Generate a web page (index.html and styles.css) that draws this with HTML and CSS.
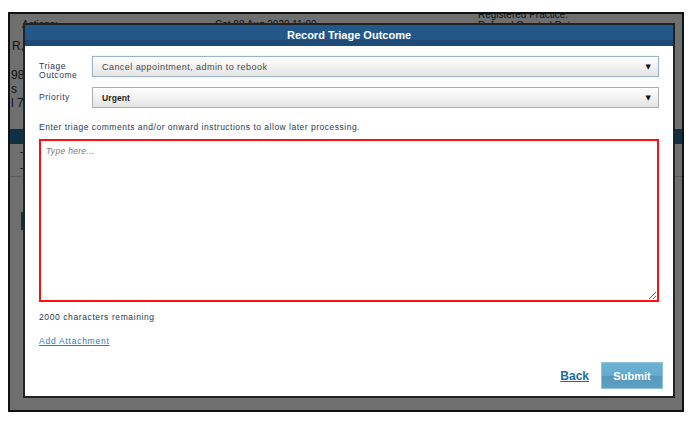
FILE: index.html
```html
<!DOCTYPE html>
<html>
<head>
<meta charset="utf-8">
<link rel="stylesheet" href="styles.css">
</head>
<body>
<div class="frame">
  <div class="page">
    <div class="bg-top">
      <div class="bg-col bg-col1">Actions:</div>
      <div class="bg-col bg-col2">Cat 88 Aug 2020 11:00</div>
      <div class="bg-col bg-col3">
        <div class="bg-reg">Registered Practice:</div>
        <div class="bg-reg">Referral Created Date:</div>
      </div>
    </div>
    <div class="bg-left">
      <div class="bg-name">R,</div>
      <div class="bg-line bg-line-first">98</div>
      <div class="bg-line">s</div>
      <div class="bg-line">l 7</div>
    </div>
    <div class="bg-bar"></div>
    <div class="bg-row">-</div>
    <div class="bg-row bg-row-last">-</div>
    <div class="bg-mark"></div>
  </div>
  <div class="overlay"></div>
  <div class="modal">
    <div class="modal-header">Record Triage Outcome</div>
    <div class="modal-body">
      <div class="field field-outcome">
        <div class="label label-two">Triage<br>Outcome</div>
        <div class="select select-focus"><span class="select-text">Cancel appointment, admin to rebook</span><span class="arrow">▼</span></div>
      </div>
      <div class="field field-priority">
        <div class="label">Priority</div>
        <div class="select"><span class="select-text select-strong">Urgent</span><span class="arrow">▼</span></div>
      </div>
      <p class="instructions">Enter triage comments and/or onward instructions to allow later processing.</p>
      <textarea class="comments" placeholder="Type here..."></textarea>
      <p class="remaining">2000 characters remaining</p>
      <a class="attach" href="#">Add Attachment</a>
    </div>
    <div class="modal-footer">
      <a class="back" href="#">Back</a>
      <button class="submit" type="button">Submit</button>
    </div>
  </div>
</div>
</body>
</html>
```

FILE: styles.css
```css
html, body {
  margin: 0;
  padding: 0;
  background: #ffffff;
}

body {
  font-family: "Liberation Sans", Arial, sans-serif;
}

.frame {
  position: relative;
  margin: 12px 0 0 8px;
  width: 672px;
  height: 396px;
  border: 2px solid #111;
  overflow: hidden;
  background: #fff;
}

/* background page (dimmed) */
.page {
  color: #1c2a3a;
  font-size: 10px;
}

.bg-top {
  display: flex;
  height: 26px;
  margin-top: -4px;
}

.bg-col1 {
  width: 185px;
  padding: 9px 0 0 12px;
}

.bg-col2 {
  width: 263px;
  padding: 9px 0 0 8px;
}

.bg-col3 {
  margin-top: -1px;
}

.bg-reg {
  line-height: 11px;
}

.bg-left {
  padding-left: 1px;
  font-size: 12px;
  color: #1c2a3a;
}

.bg-name {
  height: 20px;
  line-height: 20px;
  padding-left: 1px;
}

.bg-line {
  line-height: 14px;
}

.bg-line-first {
  margin-top: 12px;
}

.bg-bar {
  margin-top: 19px;
  height: 15px;
  background: #1f6e9e;
}

.bg-row {
  height: 16px;
  line-height: 16px;
  padding-left: 10px;
  font-size: 10px;
}

.bg-row-last {
  border-bottom: 1px solid #c9d6e0;
}

.bg-mark {
  margin: 35px 0 0 11px;
  width: 3px;
  height: 18px;
  background: #1f6e9e;
}

.overlay {
  position: absolute;
  inset: 0;
  background: rgba(0, 0, 0, 0.565);
}

/* modal dialog */
.modal {
  position: absolute;
  left: 13px;
  top: 9px;
  width: 652px;
  height: 375px;
  box-sizing: border-box;
  border: 2px solid #222;
  background: #fff;
  display: flex;
  flex-direction: column;
}

.modal-header {
  height: 21px;
  line-height: 21px;
  text-align: center;
  color: #fff;
  font-weight: bold;
  font-size: 11px;
  background: linear-gradient(to bottom, #245889 0%, #23578a 70%, #1c4976 72%, #1d4a78 100%);
}

.modal-body {
  flex: 1;
  padding: 10px 14px 0 14px;
  display: flex;
  flex-direction: column;
  align-items: flex-start;
}

.field {
  display: flex;
  align-items: center;
  width: 100%;
  height: 21px;
}

.field-priority {
  margin-top: 10px;
}

.label {
  width: 53px;
  flex: none;
  font-size: 8.5px;
  letter-spacing: 0.55px;
  color: #1d3957;
  line-height: 9px;
}

.label-two {
  align-self: flex-start;
  padding-top: 6px;
}

.select {
  flex: 1;
  height: 21px;
  box-sizing: border-box;
  border: 1px solid #adadad;
  background: linear-gradient(to bottom, #ffffff 0%, #f3f3f3 45%, #e4e4e4 100%);
  display: flex;
  align-items: center;
  padding: 0 7px 0 9px;
}

.select-focus {
  border-color: #9cb3cd;
  box-shadow: 0 0 1px #b7c9de;
}

.select-text {
  flex: 1;
  font-size: 9px;
  letter-spacing: 0.45px;
  color: #4a4a4a;
}

.select-strong {
  color: #1e1e1e;
  font-weight: bold;
  font-size: 8.5px;
  letter-spacing: 0.1px;
}

.arrow {
  font-family: "DejaVu Sans", sans-serif;
  font-size: 7px;
  color: #111;
}

.instructions {
  margin: 13px 0 0 0;
  font-size: 8.5px;
  letter-spacing: 0.5px;
  color: #1d3957;
  line-height: 12px;
}

.comments {
  margin-top: 6px;
  width: 100%;
  height: 163px;
  box-sizing: border-box;
  border: 2px solid #ff1010;
  padding: 5px 5px;
  font-family: "Liberation Sans", Arial, sans-serif;
  font-size: 8.5px;
  resize: vertical;
  outline: none;
}

.comments::placeholder {
  color: #777;
  font-style: italic;
  letter-spacing: 0.3px;
}

.remaining {
  margin: 9px 0 0 0;
  font-size: 8.5px;
  letter-spacing: 0.6px;
  color: #22384e;
  line-height: 12px;
}

.attach {
  margin-top: 12px;
  font-size: 8.5px;
  letter-spacing: 0.75px;
  color: #2b7cb6;
  line-height: 12px;
}

.modal-footer {
  display: flex;
  justify-content: flex-end;
  align-items: center;
  gap: 12px;
  padding: 0 10px 7px 0;
}

.back {
  font-size: 12px;
  font-weight: bold;
  color: #1a6aa3;
}

.submit {
  width: 62px;
  height: 27px;
  border: 1px solid #8cc2dc;
  background: linear-gradient(to bottom, #6cb2d5 0%, #65abcf 50%, #5699bb 52%, #5b9ec0 100%);
  color: #fff;
  font-family: "Liberation Sans", Arial, sans-serif;
  font-weight: bold;
  font-size: 11px;
  padding: 0;
}
```
